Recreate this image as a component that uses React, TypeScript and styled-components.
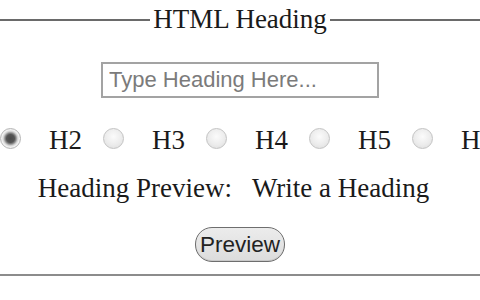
import { FC, useState } from 'react';
import styled, { createGlobalStyle } from 'styled-components';

const GlobalStyle = createGlobalStyle`
  html, body {
    margin: 0;
    padding: 0;
    background: #fff;
    overflow: hidden;
  }
  body {
    width: 480px;
    height: 300px;
  }
`;

const levels = ['H1', 'H2', 'H3', 'H4', 'H5', 'H6'];

const App: FC = () => {
  const [level, setLevel] = useState('H2');
  const [text, setText] = useState('');

  return (
    <>
      <GlobalStyle />
      <Fieldset>
        <Legend>HTML Heading</Legend>
        <HeadingInput
          type="text"
          placeholder="Type Heading Here..."
          value={text}
          onChange={(e) => setText(e.target.value)}
        />
        <RadioRow>
          {levels.map((l) => (
            <RadioItem key={l}>
              <Radio
                type="radio"
                name="level"
                checked={level === l}
                onChange={() => setLevel(l)}
              />
              <RadioLabel>{l}</RadioLabel>
            </RadioItem>
          ))}
        </RadioRow>
        <PreviewLine>
          <span>Heading Preview:</span>
          <PreviewValue>{text || 'Write a Heading'}</PreviewValue>
        </PreviewLine>
        <PreviewButton type="button">Preview</PreviewButton>
      </Fieldset>
    </>
  );
};

export default App;

const Fieldset = styled.fieldset`
  margin: 4px 0 0;
  padding: 0 0 12px;
  min-width: 0;
  width: 100%;
  box-sizing: border-box;
  border: none;
  border-top: 2px solid #6a6a6a;
  border-bottom: 2px solid #8c8c8c;
  display: flex;
  flex-direction: column;
  align-items: center;
  font-family: 'Liberation Serif', 'Times New Roman', serif;
  font-size: 27px;
  color: #1a1a1a;
`;

const Legend = styled.legend`
  margin: 0 auto;
  padding: 0 3px;
  font-size: 27px;
  line-height: 31px;
  color: #1a1a1a;
`;

const HeadingInput = styled.input`
  margin-top: 27px;
  width: 278px;
  height: 36px;
  box-sizing: border-box;
  border: 2px solid #a3a3a3;
  padding: 0 6px;
  font-family: 'Liberation Sans', Arial, sans-serif;
  font-size: 22px;
  color: #222;
  outline: none;

  &::placeholder {
    color: #7b7b7b;
  }
`;

const RadioRow = styled.div`
  margin-top: 27px;
  width: 100%;
  box-sizing: border-box;
  padding-right: 89px;
  display: flex;
  justify-content: center;
  gap: 21px;
  line-height: 31px;
`;

const RadioItem = styled.label`
  display: flex;
  align-items: center;
  gap: 28px;
  flex-shrink: 0;
`;

const Radio = styled.input`
  appearance: none;
  margin: 0 0 5px;
  width: 21px;
  height: 21px;
  border-radius: 50%;
  box-sizing: border-box;
  border: 1.5px solid #c3c3c3;
  background: radial-gradient(circle at 50% 40%, #fbfbfb 0, #ececec 55%, #dadada 100%);
  flex-shrink: 0;

  &:checked {
    border-color: #b5b5b5;
    background: radial-gradient(
      circle,
      #4a4a4a 0,
      #555 4px,
      #8a8a8a 5.5px,
      #cfcfcf 7px,
      #f0f0f0 8.5px
    );
  }
`;

const RadioLabel = styled.span`
  white-space: nowrap;
`;

const PreviewLine = styled.div`
  margin-top: 17px;
  padding-right: 13px;
  line-height: 31px;
  display: flex;
  white-space: nowrap;
`;

const PreviewValue = styled.span`
  margin-left: 20px;
`;

const PreviewButton = styled.button`
  margin-top: 23px;
  height: 35px;
  padding: 0 4px;
  border: 1.5px solid #6e6e6e;
  border-radius: 17px;
  background: linear-gradient(#ececec, #dcdcdc);
  font-family: 'Liberation Sans', Arial, sans-serif;
  font-size: 22.5px;
  color: #222;
  box-shadow: inset 0 -1px 0 #c8c8c8;
`;
